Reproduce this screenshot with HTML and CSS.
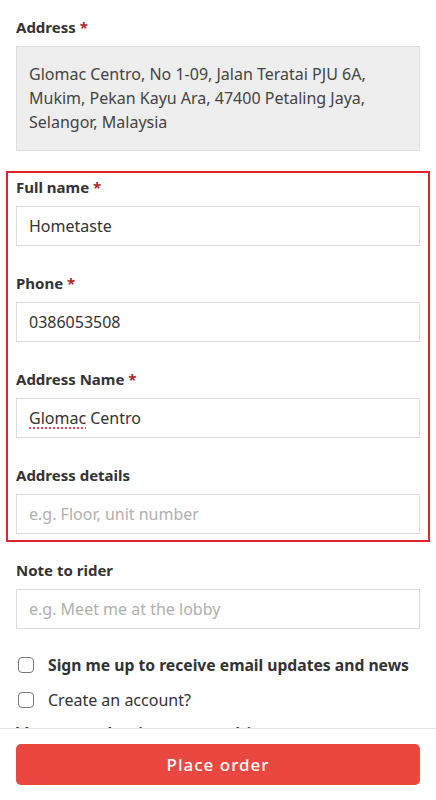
FILE: index.html
```html
<!DOCTYPE html>
<html lang="en">
<head>
    <meta charset="UTF-8">
    <meta name="viewport" content="width=device-width, initial-scale=1.0">
    <title>Checkout</title>
    <link rel="stylesheet" href="styles.css">
</head>
<body>
    <form class="checkout">
        <div class="field">
            <label>Address <span class="req">*</span></label>
            <div class="address-box">Glomac Centro, No 1-09, Jalan Teratai PJU 6A, Mukim, Pekan Kayu Ara, 47400 Petaling Jaya, Selangor, Malaysia</div>
        </div>

        <!-- 수정할 주소 정보 -->
        <div class="highlight">
            <div class="field">
                <label for="fullName">Full name <span class="req">*</span></label>
                <input type="text" id="fullName" value="Hometaste">
            </div>
            <div class="field">
                <label for="phone">Phone <span class="req">*</span></label>
                <input type="text" id="phone" value="0386053508">
            </div>
            <div class="field">
                <label>Address Name <span class="req">*</span></label>
                <div class="text-input"><span class="typo">Glomac</span> Centro</div>
            </div>
            <div class="field">
                <label for="addressDetails">Address details</label>
                <input type="text" id="addressDetails" placeholder="e.g. Floor, unit number">
            </div>
        </div>

        <div class="field note">
            <label for="note">Note to rider</label>
            <input type="text" id="note" placeholder="e.g. Meet me at the lobby">
        </div>

        <label class="check bold"><input type="checkbox"> Sign me up to receive email updates and news</label>
        <label class="check"><input type="checkbox"> Create an account?</label>

        <h2 class="more">You may be interested in</h2>
    </form>

    <div class="order-bar">
        <button type="button">Place order</button>
    </div>
</body>
</html>
```

FILE: styles.css
```css
body {
    margin: 0;
    padding: 0 16px;
    font-family: "Noto Sans", "Open Sans", sans-serif;
    color: #333;
    background: #fff;
}

.checkout {
    padding-top: 17px;
}

.field label {
    display: block;
    font-size: 15px;
    font-weight: 700;
    line-height: 20px;
    margin-bottom: 9px;
}

.field + .field {
    margin-top: 27px;
}

.req {
    color: #b3262a;
}

.address-box {
    background: #eeeeee;
    border: 1px solid #dedede;
    padding: 15px 12px 16px;
    font-size: 16px;
    line-height: 24px;
    color: #444;
}

input[type="text"], .text-input {
    display: block;
    width: 100%;
    box-sizing: border-box;
    height: 40px;
    padding: 0 12px;
    border: 1px solid #dddddd;
    border-radius: 0;
    font-family: inherit;
    font-size: 16px;
    line-height: 38px;
    color: #333;
    background: #fff;
    margin: 0;
}

input::placeholder {
    color: #b0b0b0;
}

.typo {
    text-decoration: underline dotted #e0242f;
    text-underline-offset: 4px;
}

/* 빨간 테두리 영역 */
.highlight {
    margin: 20px -10px 0;
    padding: 4px 8px 6px;
    border: 2px solid #e0242f;
}

.note {
    margin-top: 18px;
}

.check {
    display: flex;
    align-items: center;
    gap: 14px;
    font-size: 16px;
    line-height: 22px;
    height: 35px;
    padding-left: 2px;
}

.note + .check {
    margin-top: 18px;
}

.check.bold {
    font-weight: 700;
    font-size: 15.7px;
}

.check input {
    appearance: none;
    width: 16px;
    height: 16px;
    margin: 0;
    border: 1.5px solid #777;
    border-radius: 4px;
    flex: none;
}

.more {
    font-size: 21px;
    font-weight: 500;
    margin: 4px 0 0;
    padding-bottom: 80px;
}

.order-bar {
    position: fixed;
    left: 0;
    right: 0;
    bottom: 0;
    height: 72px;
    background: #fff;
    border-top: 1px solid #e4e4e4;
    padding: 15px 16px 0;
    box-sizing: border-box;
}

.order-bar button {
    width: 100%;
    height: 41px;
    border: none;
    border-radius: 5px;
    background: #e9473f;
    color: #fff;
    font-family: inherit;
    font-size: 17px;
    font-weight: 500;
    letter-spacing: 1px;
    cursor: pointer;
}
```
